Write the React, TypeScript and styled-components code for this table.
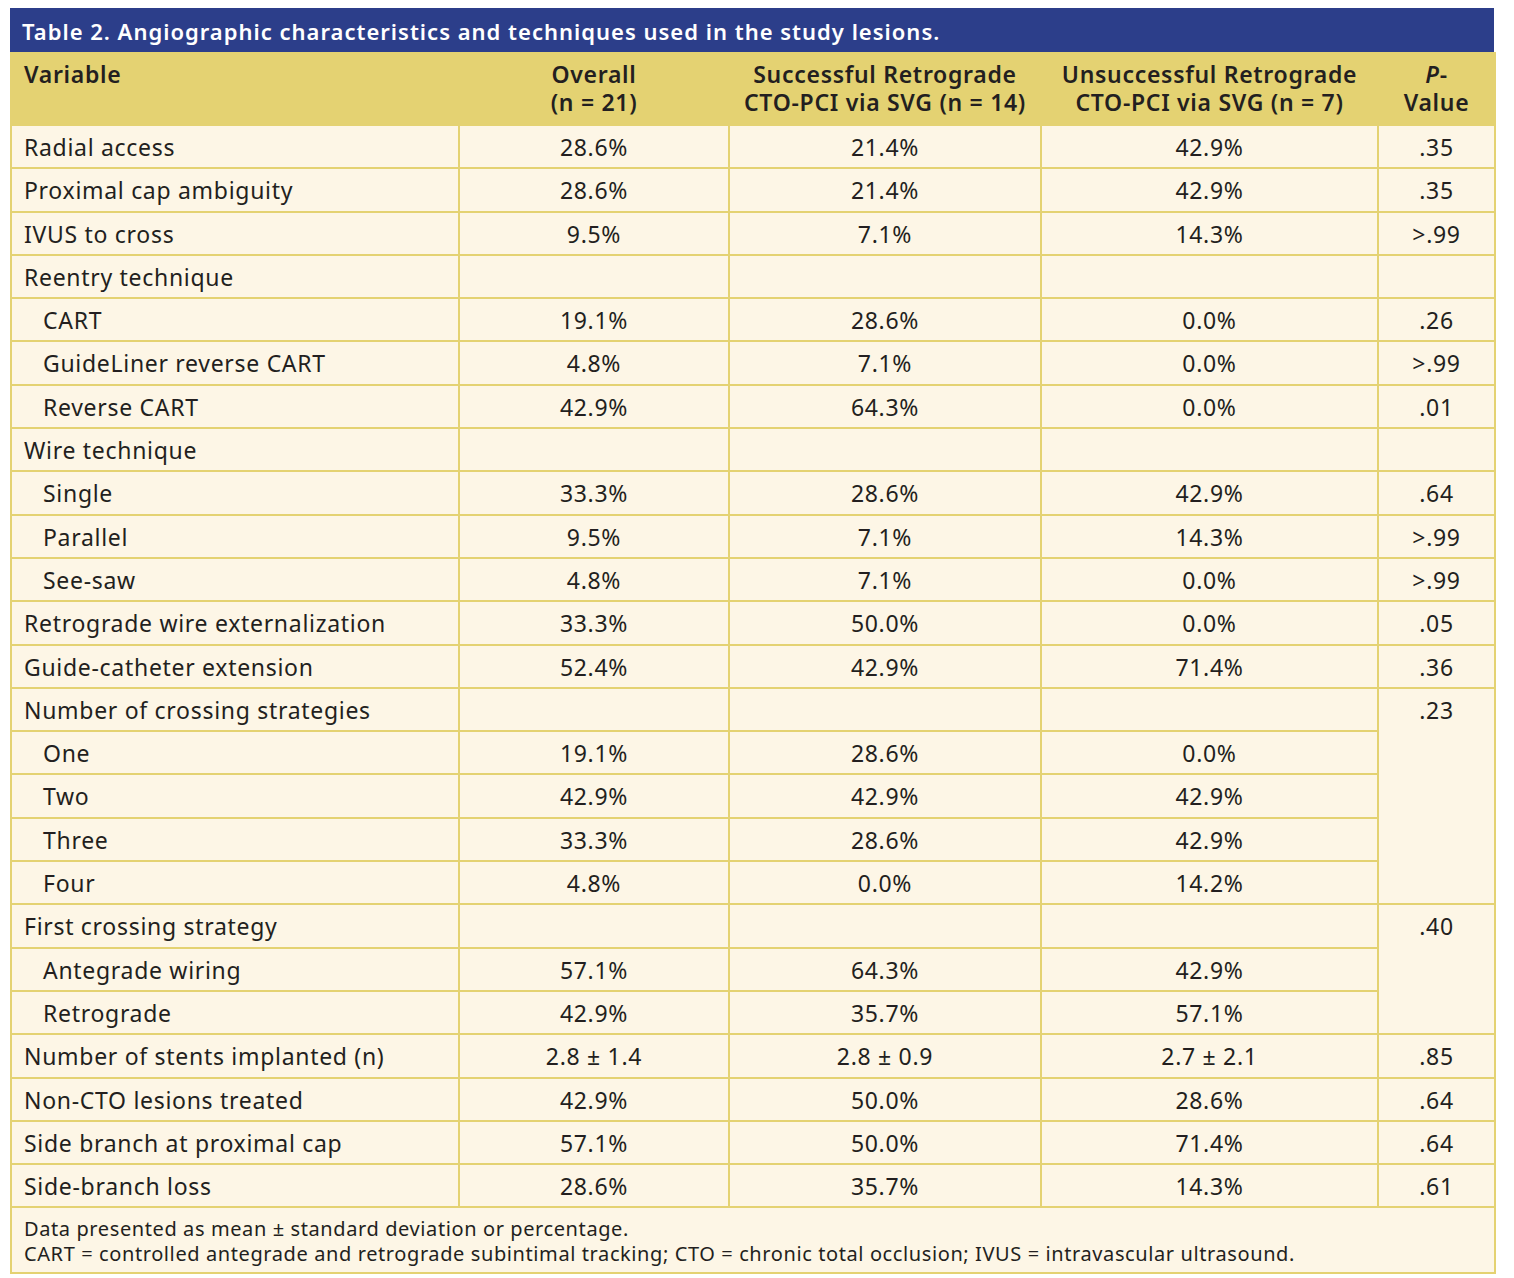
import styled, { createGlobalStyle } from 'styled-components'

const GlobalStyle = createGlobalStyle`
    body {
        margin: 0;
        background: #ffffff;
        font-family: "Noto Sans", "Open Sans", Arial, sans-serif;
        color: #231f20;
    }
`

const Page = styled.div`
    padding: 8px 20px 0 10px;
    width: 1484px;
`

const Title = styled.div`
    background: #2c3e8a;
    color: #ffffff;
    font-size: 22px;
    font-weight: 600;
    height: 44px;
    line-height: 46px;
    padding-left: 12px;
    letter-spacing: 1px;
`

const Table = styled.table`
    width: 100%;
    border-collapse: collapse;
    table-layout: fixed;
    font-size: 23px;
    letter-spacing: 0.7px;
    background: #fdf6e6;
`

const HeadCell = styled.th<{ $align?: string }>`
    background: #e4d272;
    border: 2px solid #e4d272;
    font-weight: 600;
    text-align: ${p => p.$align || 'center'};
    vertical-align: top;
    line-height: 28px;
    padding: 6px 12px 8px;
    height: 69px;
    box-sizing: border-box;
    white-space: nowrap;
`

const Cell = styled.td<{ $indent?: boolean; $align?: string }>`
    border: 2px solid #e4d272;
    text-align: ${p => p.$align || 'center'};
    vertical-align: top;
    line-height: 26px;
    height: 43.3px;
    box-sizing: border-box;
    padding: 8px 12px 0 ${p => (p.$indent ? '31px' : '12px')};
    white-space: nowrap;
`

const Note = styled.td`
    border: 2px solid #e4d272;
    font-size: 20px;
    letter-spacing: 0.6px;
    line-height: 25px;
    padding: 8px 12px 6px;
    white-space: nowrap;
`

type Row = {
    label: string
    indent?: boolean
    values: string[]
    p?: string
    span?: number
    skipP?: boolean
}

const rows: Row[] = [
    { label: 'Radial access', values: ['28.6%', '21.4%', '42.9%'], p: '.35' },
    { label: 'Proximal cap ambiguity', values: ['28.6%', '21.4%', '42.9%'], p: '.35' },
    { label: 'IVUS to cross', values: ['9.5%', '7.1%', '14.3%'], p: '>.99' },
    { label: 'Reentry technique', values: ['', '', ''], p: '' },
    { label: 'CART', indent: true, values: ['19.1%', '28.6%', '0.0%'], p: '.26' },
    { label: 'GuideLiner reverse CART', indent: true, values: ['4.8%', '7.1%', '0.0%'], p: '>.99' },
    { label: 'Reverse CART', indent: true, values: ['42.9%', '64.3%', '0.0%'], p: '.01' },
    { label: 'Wire technique', values: ['', '', ''], p: '' },
    { label: 'Single', indent: true, values: ['33.3%', '28.6%', '42.9%'], p: '.64' },
    { label: 'Parallel', indent: true, values: ['9.5%', '7.1%', '14.3%'], p: '>.99' },
    { label: 'See-saw', indent: true, values: ['4.8%', '7.1%', '0.0%'], p: '>.99' },
    { label: 'Retrograde wire externalization', values: ['33.3%', '50.0%', '0.0%'], p: '.05' },
    { label: 'Guide-catheter extension', values: ['52.4%', '42.9%', '71.4%'], p: '.36' },
    { label: 'Number of crossing strategies', values: ['', '', ''], p: '.23', span: 5 },
    { label: 'One', indent: true, values: ['19.1%', '28.6%', '0.0%'], skipP: true },
    { label: 'Two', indent: true, values: ['42.9%', '42.9%', '42.9%'], skipP: true },
    { label: 'Three', indent: true, values: ['33.3%', '28.6%', '42.9%'], skipP: true },
    { label: 'Four', indent: true, values: ['4.8%', '0.0%', '14.2%'], skipP: true },
    { label: 'First crossing strategy', values: ['', '', ''], p: '.40', span: 3 },
    { label: 'Antegrade wiring', indent: true, values: ['57.1%', '64.3%', '42.9%'], skipP: true },
    { label: 'Retrograde', indent: true, values: ['42.9%', '35.7%', '57.1%'], skipP: true },
    { label: 'Number of stents implanted (n)', values: ['2.8 ± 1.4', '2.8 ± 0.9', '2.7 ± 2.1'], p: '.85' },
    { label: 'Non-CTO lesions treated', values: ['42.9%', '50.0%', '28.6%'], p: '.64' },
    { label: 'Side branch at proximal cap', values: ['57.1%', '50.0%', '71.4%'], p: '.64' },
    { label: 'Side-branch loss', values: ['28.6%', '35.7%', '14.3%'], p: '.61' },
]

const App = () => {
    return (
        <Page>
            <GlobalStyle />
            <Title>Table 2. Angiographic characteristics and techniques used in the study lesions.</Title>
            <Table>
                <colgroup>
                    <col style={{ width: '448px' }} />
                    <col style={{ width: '270px' }} />
                    <col style={{ width: '312px' }} />
                    <col style={{ width: '337px' }} />
                    <col style={{ width: '117px' }} />
                </colgroup>
                <thead>
                    <tr>
                        <HeadCell $align="left">Variable</HeadCell>
                        <HeadCell>Overall<br />(n = 21)</HeadCell>
                        <HeadCell>Successful Retrograde<br />CTO-PCI via SVG (n = 14)</HeadCell>
                        <HeadCell>Unsuccessful Retrograde<br />CTO-PCI via SVG (n = 7)</HeadCell>
                        <HeadCell><i>P</i>-<br />Value</HeadCell>
                    </tr>
                </thead>
                <tbody>
                    {rows.map(row => (
                        <tr key={row.label}>
                            <Cell $align="left" $indent={row.indent}>{row.label}</Cell>
                            {row.values.map((v, i) => (
                                <Cell key={i}>{v}</Cell>
                            ))}
                            {!row.skipP && <Cell rowSpan={row.span}>{row.p}</Cell>}
                        </tr>
                    ))}
                    <tr>
                        <Note colSpan={5}>
                            Data presented as mean ± standard deviation or percentage.
                            <br />
                            CART = controlled antegrade and retrograde subintimal tracking; CTO = chronic total occlusion; IVUS = intravascular ultrasound.
                        </Note>
                    </tr>
                </tbody>
            </Table>
        </Page>
    )
}

export default App
